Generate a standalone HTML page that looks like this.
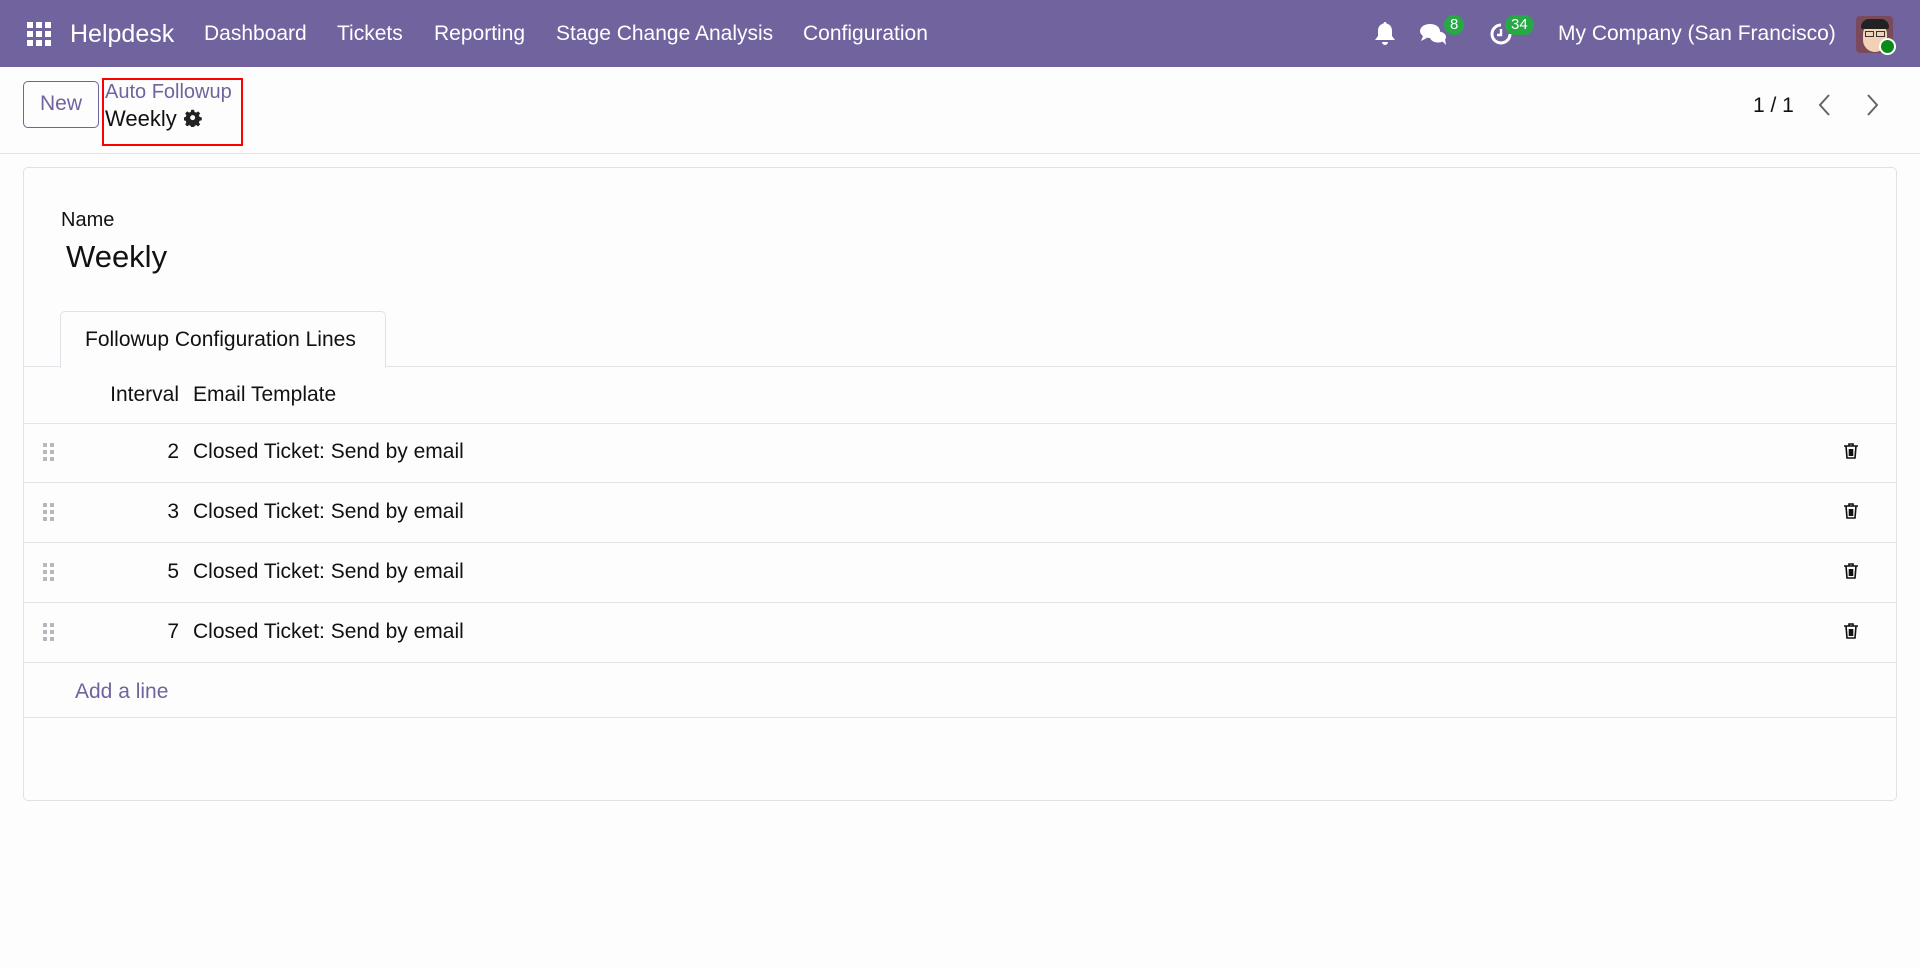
<!DOCTYPE html>
<html><head><meta charset="utf-8"><style>
*{box-sizing:border-box;margin:0;padding:0}
body{width:1920px;height:967px;background:#fdfdfd;font-family:"Liberation Sans",sans-serif;color:#111;position:relative;overflow:hidden}
.abs{position:absolute;white-space:nowrap}
.nav{position:absolute;left:0;top:0;width:1920px;height:67px;background:#71639e}
.nav .t{position:absolute;color:#fff;font-size:21px;top:22px}
.badge{position:absolute;background:#28a745;color:#fff;font-size:15px;border-radius:10px;height:20px;line-height:20px;padding:0 6px;top:15px}
.row{position:absolute;left:24px;width:1872px;border-top:1.5px solid #e3e5e8}
.cell{position:absolute;font-size:21px}
</style></head><body>
<div class="nav">
  <svg class="abs" style="left:27px;top:22px" width="24" height="24" viewBox="0 0 24 24" fill="#fff">
    <rect x="0" y="0" width="6" height="6"/><rect x="9" y="0" width="6" height="6"/><rect x="18" y="0" width="6" height="6"/>
    <rect x="0" y="9" width="6" height="6"/><rect x="9" y="9" width="6" height="6"/><rect x="18" y="9" width="6" height="6"/>
    <rect x="0" y="18" width="6" height="6"/><rect x="9" y="18" width="6" height="6"/><rect x="18" y="18" width="6" height="6"/>
  </svg>
  <div class="t" style="left:70px;font-size:25px;top:20px">Helpdesk</div>
  <div class="t" style="left:204px">Dashboard</div>
  <div class="t" style="left:337px">Tickets</div>
  <div class="t" style="left:434px">Reporting</div>
  <div class="t" style="left:556px">Stage Change Analysis</div>
  <div class="t" style="left:803px">Configuration</div>
  <svg class="abs" style="left:1374px;top:21px" width="22" height="25" viewBox="0 0 22 25" fill="#fff"><path d="M11 1c1 0 1.5.7 1.5 1.5C16 3.3 18 6 18 10v5l3 4H1l3-4v-5c0-4 2-6.7 5.5-7.5C9.5 1.7 10 1 11 1zM8 21h6a3 3 0 0 1-6 0z"/></svg>
  <svg class="abs" style="left:1420px;top:22px" width="28" height="24" viewBox="0 0 28 24" fill="#fff"><ellipse cx="10" cy="9" rx="10" ry="7"/><path d="M3 14l-2 5 6-3z"/><ellipse cx="18" cy="15" rx="8" ry="5.5"/><path d="M22 19l4 4-1-6z"/></svg>
  <div class="badge" style="left:1444px">8</div>
  <svg class="abs" style="left:1489px;top:22px" width="24" height="24" viewBox="0 0 24 24" fill="none" stroke="#fff" stroke-width="3"><path d="M21 12a9 9 0 1 1-9-9"/><path d="M12 7v6h-4" stroke-width="2.4"/></svg>
  <div class="badge" style="left:1505px">34</div>
  <div class="t" style="left:1558px">My Company (San Francisco)</div>
  <div class="abs" style="left:1856px;top:16px;width:37px;height:37px;background:#7a4a5a;border-radius:4px;overflow:hidden">
    <div style="position:absolute;left:7px;top:8px;width:24px;height:28px;background:#f1d2b6;border-radius:10px 10px 12px 12px"></div>
    <div style="position:absolute;left:5px;top:3px;width:28px;height:10px;background:#222;border-radius:8px 8px 2px 2px"></div>
    <div style="position:absolute;left:9px;top:15px;width:9px;height:6px;border:1.5px solid #333"></div>
    <div style="position:absolute;left:20px;top:15px;width:9px;height:6px;border:1.5px solid #333"></div>
  </div>
  <div class="abs" style="left:1879px;top:38px;width:17px;height:17px;background:#0a8a1a;border:2px solid #fff;border-radius:50%"></div>
</div>
<div class="abs" style="left:0;top:153px;width:1920px;border-top:1px solid #dfe1e4"></div>
<div class="abs" style="left:23px;top:81px;width:76px;height:47px;border:1.5px solid #71639e;border-radius:5px;color:#71639e;font-size:21px;text-align:center;line-height:44px">New</div>
<div class="abs" style="left:102px;top:78px;width:141px;height:68px;border:2.5px solid #f00"></div>
<div class="abs" style="left:105px;top:81px;font-size:20px;color:#71639e">Auto Followup</div>
<div class="abs" style="left:105px;top:106px;font-size:22px">Weekly</div>
<svg class="abs" style="left:184px;top:109px" width="18" height="18" viewBox="0 0 24 24" fill="#222"><path d="M10 1h4l.6 3 2.4 1 2.6-1.7 2.8 2.8L20.7 8.7l1 2.4 3 .6v4l-3 .6-1 2.4 1.7 2.6-2.8 2.8-2.6-1.7-2.4 1-.6 3h-4l-.6-3-2.4-1-2.6 1.7-2.8-2.8 1.7-2.6-1-2.4-3-.6v-4l3-.6 1-2.4L1.7 6.1l2.8-2.8L7 5l2.4-1zM12 8.5a3.5 3.5 0 1 0 0 7 3.5 3.5 0 0 0 0-7z" transform="scale(.96)"/></svg>
<div class="abs" style="left:1753px;top:94px;font-size:21px">1 / 1</div>
<svg class="abs" style="left:1817px;top:93px" width="14" height="24" viewBox="0 0 14 24" fill="none" stroke="#666" stroke-width="2"><path d="M12 2L3 12l9 10"/></svg>
<svg class="abs" style="left:1866px;top:93px" width="14" height="24" viewBox="0 0 14 24" fill="none" stroke="#666" stroke-width="2"><path d="M2 2l9 10-9 10"/></svg>

<div class="abs" style="left:23px;top:167px;width:1874px;height:634px;border:1.5px solid #dee2e6;border-radius:5px;background:#fdfdfd"></div>
<div class="abs" style="left:61px;top:209px;font-size:20px">Name</div>
<div class="abs" style="left:66px;top:239px;font-size:31px">Weekly</div>
<div class="abs" style="left:24px;top:366px;width:1872px;border-top:1.5px solid #e3e5e8"></div>
<div class="abs" style="left:60px;top:311px;width:326px;height:57px;border:1.5px solid #dee2e6;border-bottom:none;border-radius:5px 5px 0 0;background:#fdfdfd"></div>
<div class="abs" style="left:85px;top:328px;font-size:21px">Followup Configuration Lines</div>
<div class="cell" style="left:90px;width:89px;text-align:right;top:383px">Interval</div>
<div class="cell" style="left:193px;top:383px">Email Template</div>

<div class="row" style="top:423px"></div>
<div class="row" style="top:482px"></div>
<div class="row" style="top:542px"></div>
<div class="row" style="top:602px"></div>
<div class="row" style="top:662px"></div>
<div class="row" style="top:717px"></div>

<div class="cell" style="left:100px;width:79px;text-align:right;top:440px">2</div>
<div class="cell" style="left:193px;top:440px">Closed Ticket: Send by email</div>
<div class="cell" style="left:100px;width:79px;text-align:right;top:500px">3</div>
<div class="cell" style="left:193px;top:500px">Closed Ticket: Send by email</div>
<div class="cell" style="left:100px;width:79px;text-align:right;top:560px">5</div>
<div class="cell" style="left:193px;top:560px">Closed Ticket: Send by email</div>
<div class="cell" style="left:100px;width:79px;text-align:right;top:620px">7</div>
<div class="cell" style="left:193px;top:620px">Closed Ticket: Send by email</div>
<div class="cell" style="left:75px;top:680px;color:#71639e">Add a line</div>

<svg width="0" height="0" style="position:absolute"><defs>
<g id="dr" fill="#b5b8bd"><rect x="0" y="0" width="4" height="4"/><rect x="7" y="0" width="4" height="4"/><rect x="0" y="7" width="4" height="4"/><rect x="7" y="7" width="4" height="4"/><rect x="0" y="14" width="4" height="4"/><rect x="7" y="14" width="4" height="4"/></g>
<g id="tr" fill="none" stroke="#111" stroke-width="1.6"><path d="M1 4h14M6 4V2h4v2M3 4l1 12h8l1-12M6.5 7v7M8 7v7M9.5 7v7"/></g>
</defs></svg>
<svg class="abs" style="left:43px;top:443px" width="11" height="18"><use href="#dr"/></svg>
<svg class="abs" style="left:43px;top:503px" width="11" height="18"><use href="#dr"/></svg>
<svg class="abs" style="left:43px;top:563px" width="11" height="18"><use href="#dr"/></svg>
<svg class="abs" style="left:43px;top:623px" width="11" height="18"><use href="#dr"/></svg>
<svg class="abs" style="left:1843px;top:442px" width="16" height="18"><use href="#tr"/></svg>
<svg class="abs" style="left:1843px;top:502px" width="16" height="18"><use href="#tr"/></svg>
<svg class="abs" style="left:1843px;top:562px" width="16" height="18"><use href="#tr"/></svg>
<svg class="abs" style="left:1843px;top:622px" width="16" height="18"><use href="#tr"/></svg>
</body></html>
